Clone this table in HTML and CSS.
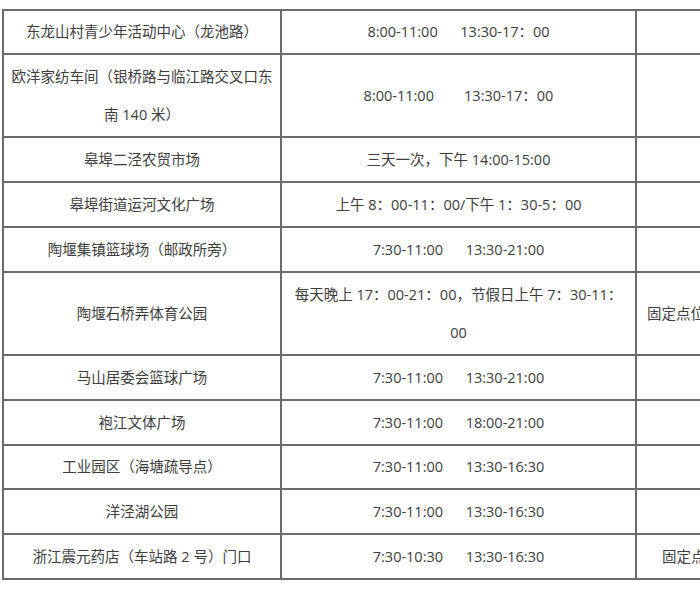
FILE: index.html
```html
<!DOCTYPE html>
<html lang="zh-CN">
<head>
<meta charset="utf-8">
<title>点位时间表</title>
<link rel="stylesheet" href="styles.css">
</head>
<body>
<div class="page">
<table class="sched">
  <colgroup>
    <col class="c-name">
    <col class="c-time">
    <col class="c-note">
  </colgroup>
  <tbody>
    <tr class="r0"><td>东龙山村青少年活动中心（龙池路）</td><td class="t">8:00-11:00      13:30-17：00</td><td></td></tr>
    <tr class="r2"><td class="two">欧洋家纺车间（银桥路与临江路交叉口东<br>南 140 米）</td><td class="t">8:00-11:00        13:30-17：00</td><td></td></tr>
    <tr class="r1"><td>皋埠二泾农贸市场</td><td class="t">三天一次，下午 14:00-15:00</td><td></td></tr>
    <tr class="r1"><td>皋埠街道运河文化广场</td><td class="t">上午 8：00-11：00/下午 1：30-5：00</td><td></td></tr>
    <tr class="r1"><td>陶堰集镇篮球场（邮政所旁）</td><td class="t">7:30-11:00      13:30-21:00</td><td></td></tr>
    <tr class="r2"><td>陶堰石桥弄体育公园</td><td class="t two">每天晚上 17：00-21：00，节假日上午 7：30-11：<br>00</td><td class="note note-a">固定点位（石桥弄体育公园）</td></tr>
    <tr class="r1"><td>马山居委会篮球广场</td><td class="t">7:30-11:00      13:30-21:00</td><td></td></tr>
    <tr class="r1"><td>袍江文体广场</td><td class="t">7:30-11:00      18:00-21:00</td><td></td></tr>
    <tr class="r0"><td>工业园区（海塘疏导点）</td><td class="t">7:30-11:00      13:30-16:30</td><td></td></tr>
    <tr class="r1"><td>洋泾湖公园</td><td class="t">7:30-11:00      13:30-16:30</td><td></td></tr>
    <tr class="r1"><td>浙江震元药店（车站路 2 号）门口</td><td class="t">7:30-10:30      13:30-16:30</td><td class="note note-b">固定点位（门口）</td></tr>
  </tbody>
</table>
</div>
</body>
</html>
```

FILE: styles.css
```css
html, body {
  margin: 0;
  padding: 0;
  background: #ffffff;
  overflow: hidden;
}

.page {
  padding: 9px 0 0 2px;
  width: 900px;
}

.sched {
  border-collapse: collapse;
  table-layout: fixed;
  width: 840px;
  font-family: "Open Sans", "Noto Sans CJK SC", sans-serif;
  font-size: 14.5px;
  color: #3d3d3d;
}

.c-name { width: 278px; }
.c-time { width: 355px; }
.c-note { width: 207px; }

.sched td {
  border: 2px solid #6b6b6b;
  text-align: center;
  vertical-align: middle;
  padding: 0 4px;
  line-height: 20px;
  white-space: nowrap;
  overflow: hidden;
}

.sched .t {
  white-space: pre;
}

.sched .two {
  line-height: 38px;
}

.r0 { height: 44px; }
.r1 { height: 45px; }
.r2 { height: 83px; }

.sched .note {
  text-align: left;
}

.sched .note-a { padding-left: 10px; }
.sched .note-b { padding-left: 25px; }
```
